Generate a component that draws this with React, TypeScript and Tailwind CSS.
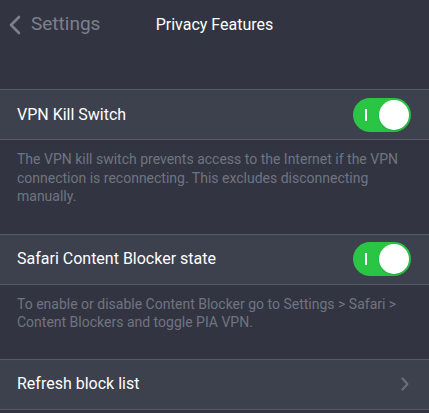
import { ReactNode } from 'react';

function Toggle() {
  return (
    <div className="relative flex h-[34px] w-[58px] items-center rounded-full bg-[#2ac545]">
      <div className="ml-[12px] h-[12px] w-[2px] bg-white" />
      <div className="absolute right-[2px] top-[2px] h-[30px] w-[30px] rounded-full bg-white shadow" />
    </div>
  );
}

function Row({ label, right }: { label: string; right: ReactNode }) {
  return (
    <div className="flex h-[51px] items-center justify-between border-y border-[#565a67] bg-[#3d404d] pl-[17px] pr-[18px]">
      <span className="text-[16px] text-white">{label}</span>
      {right}
    </div>
  );
}

function Note({ children }: { children: ReactNode }) {
  return <p className="px-[17px] pt-[10px] text-[14px] leading-[18.5px] text-[#707481]">{children}</p>;
}

export default function App() {
  return (
    <div className="h-[413px] w-[429px] overflow-hidden bg-[#323541] font-['Roboto',sans-serif]">
      {/* Nav bar */}
      <div className="relative flex h-[49px] items-center">
        <div className="flex items-center pl-[8px] text-[#7d808c]">
          <svg width="14" height="20" viewBox="0 0 14 20" fill="none">
            <path d="M11 2L3 10l8 8" stroke="currentColor" strokeWidth="2.6" strokeLinecap="round" strokeLinejoin="round" />
          </svg>
          <span className="ml-[9px] text-[19px]">Settings</span>
        </div>
        <span className="absolute left-1/2 -translate-x-1/2 text-[16px] text-white">Privacy Features</span>
      </div>

      <div className="mt-[40px]">
        <Row label="VPN Kill Switch" right={<Toggle />} />
        <Note>
          The VPN kill switch prevents access to the Internet if the VPN connection is reconnecting. This excludes
          disconnecting manually.
        </Note>
      </div>

      <div className="mt-[28px]">
        <Row label="Safari Content Blocker state" right={<Toggle />} />
        <Note>To enable or disable Content Blocker go to Settings &gt; Safari &gt; Content Blockers and toggle PIA VPN.</Note>
      </div>

      <div className="mt-[27px]">
        <Row
          label="Refresh block list"
          right={
            <svg width="8" height="14" viewBox="0 0 8 14" fill="none" className="mr-[2px]">
              <path d="M1.5 1.5L6.5 7l-5 5.5" stroke="#6c707c" strokeWidth="2" strokeLinecap="round" strokeLinejoin="round" />
            </svg>
          }
        />
      </div>
    </div>
  );
}
